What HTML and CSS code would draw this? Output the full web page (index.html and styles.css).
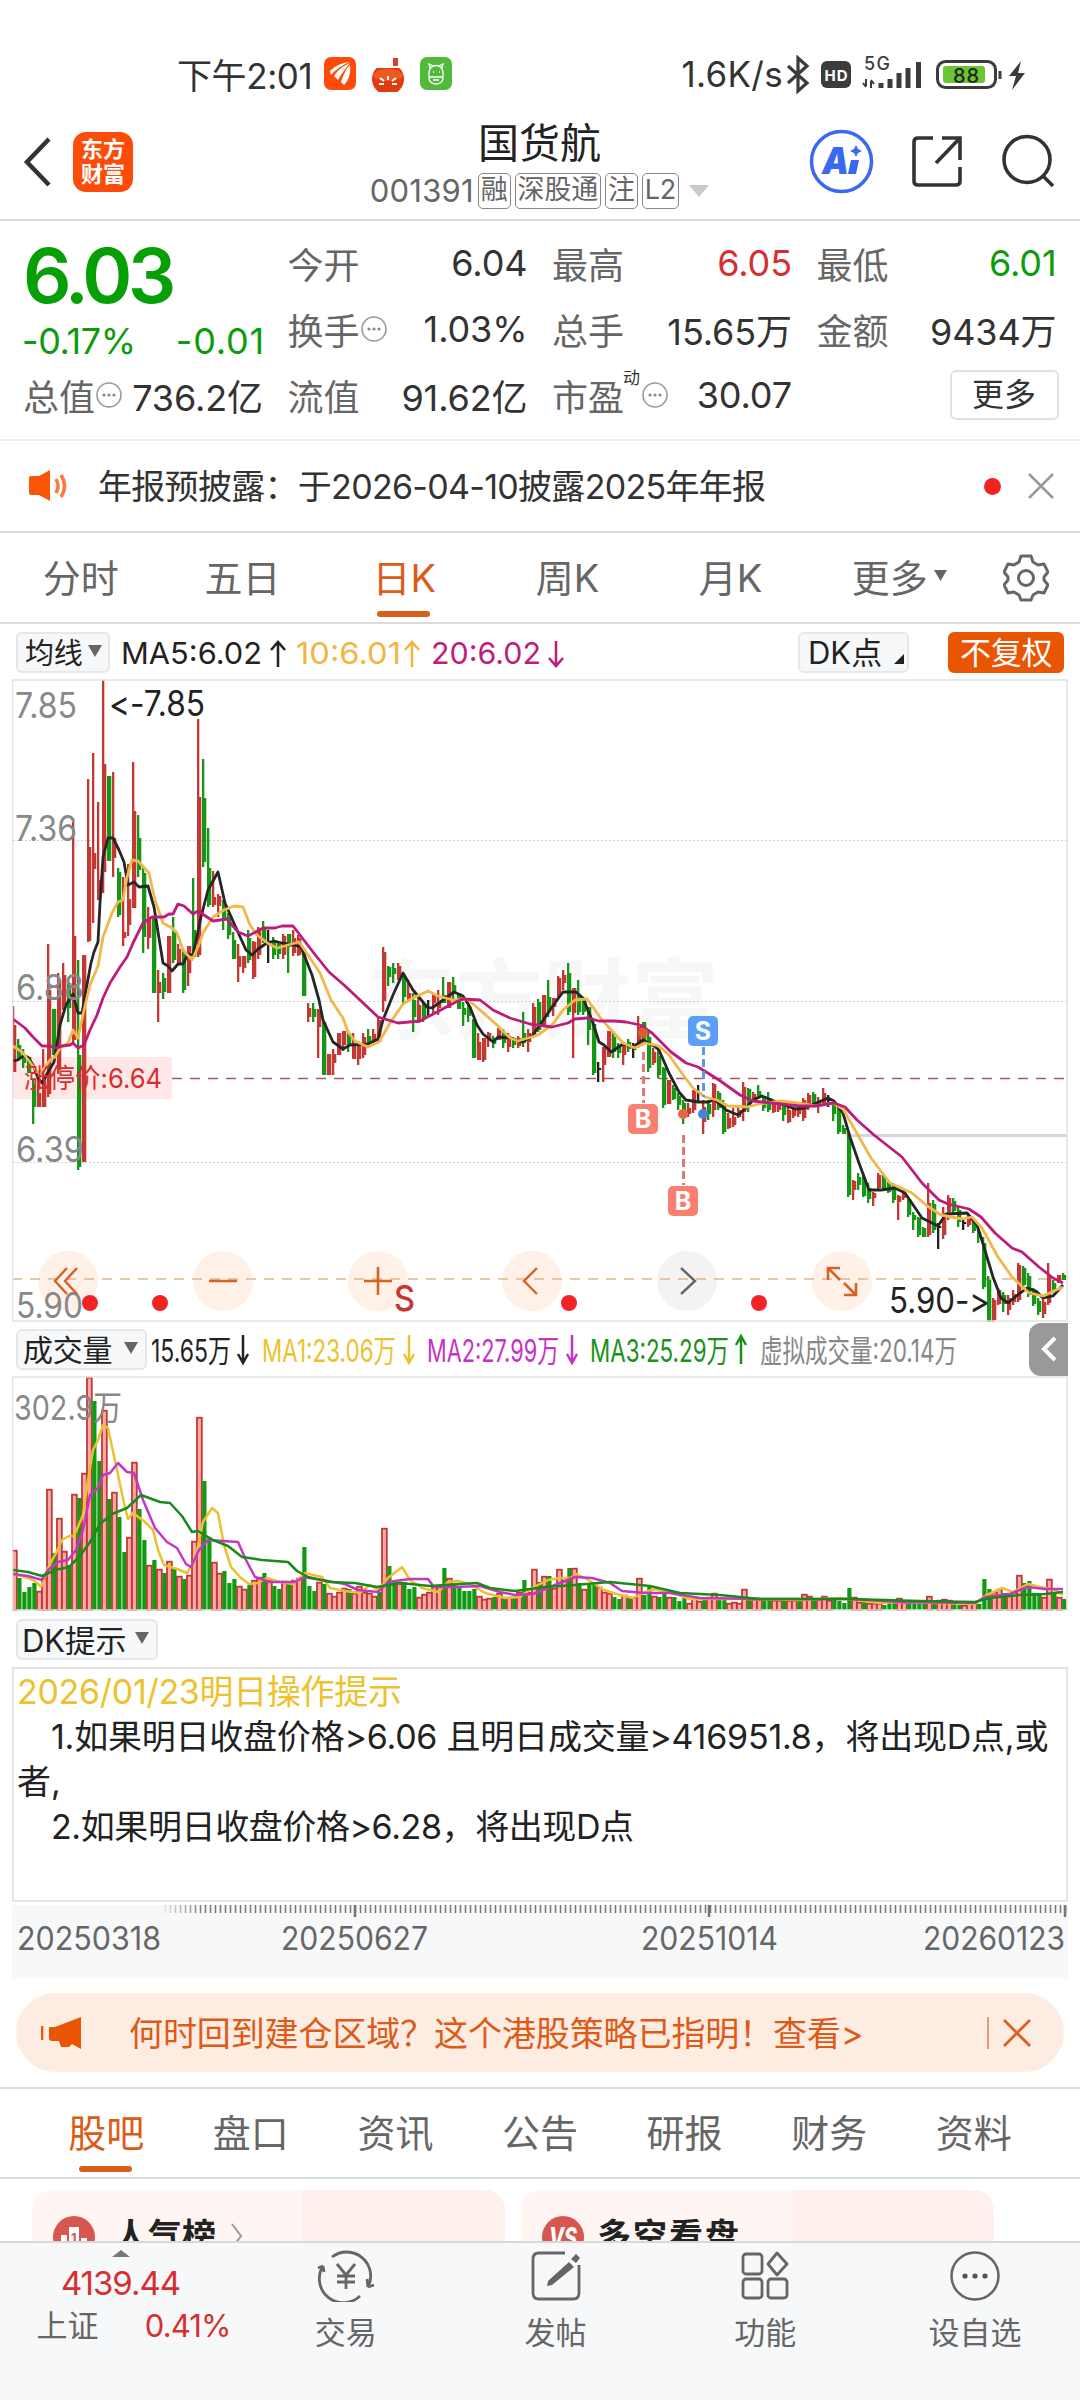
FILE: index.html
```html
<!DOCTYPE html>
<html lang="zh-CN">
<head>
<meta charset="utf-8">
<title>国货航 001391</title>
<link rel="stylesheet" href="styles.css">
</head>
<body>
<div class="screen">
  <div class="status">
    <span class="clock">下午2:01</span>
    <svg class="apps" width="130" height="36" viewBox="0 0 130 36">
      <rect x="1" y="1" width="32" height="33" rx="7" fill="#fd4b0a"/>
      <path d="M7 15C12 10 18 7 26 6C22 8 13 13 8 19ZM11 20C15 14 20 10 27 7C23 12 18 18 15 24ZM18 26C20 19 23 13 27 9C28 16 26 24 21 29Z" fill="#fff"/>
      <circle cx="65" cy="23" r="16" fill="#e23a12"/><rect x="48" y="0" width="34" height="12" fill="#fff"/><ellipse cx="65" cy="19" rx="15" ry="6" fill="#ec5a22"/>
      <path d="M70 2h5v8h-5z" fill="#c8452c"/><path d="M57 22l4 3m-5 3h5m12-6l-4 3m5 3h-5M65 20v4" stroke="#fff" stroke-width="2"/>
      <rect x="97" y="1" width="32" height="33" rx="7" fill="#52b93c"/>
      <g fill="none" stroke="#fff" stroke-width="1.3"><path d="M106 17c0-10 14-10 14 0v5c0 8-14 8-14 0zM107 12l-1-4 4 2m9 2l1-4-4 2M106 21h14"/><path d="M110 16h1m5 0h1M110 24h6"/></g>
    </svg>
    <span class="speed">1.6K/s</span>
    <svg class="sysicons" width="244" height="40" viewBox="784 55 244 40">
      <path d="M788 66l19 17-9 8V58l9 8-19 17" fill="none" stroke="#3c3c3c" stroke-width="3.2"/>
      <rect x="821" y="61" width="30" height="27" rx="6" fill="#3c3c3c"/>
      <text x="824.500" y="81" class="hd" textLength="23">HD</text>
      <text x="864" y="70" class="fiveg" textLength="26">5G</text>
      <path d="M866 79v7m0 1l-3-4m8 5v-7m0-1l3 4" stroke="#3c3c3c" stroke-width="2" fill="none"/>
      <path d="M881 88v-5M890 88v-9M899 88v-15M908 88v-20M918.500 88v-26" stroke="#3c3c3c" stroke-width="5"/>
      <rect x="937.500" y="61.500" width="58" height="26" rx="8" fill="none" stroke="#3c3c3c" stroke-width="3"/>
      <rect x="943" y="66" width="42" height="17" rx="3" fill="#69c530"/>
      <path d="M1000 71v8" stroke="#3c3c3c" stroke-width="3"/>
      <text x="953" y="83" class="batt" textLength="26">88</text>
      <path d="M1021 61l-12 15h7l-4 14 13-17h-7z" fill="#3c3c3c"/>
    </svg>
  </div>

  <header class="header">
    <svg width="32" height="56" viewBox="0 0 32 56"><path d="M27 5L5 28l22 23" fill="none" stroke="#333" stroke-width="4.500"/></svg>
    <div class="logo"><span>东方</span><span>财富</span></div>
    <div class="title">
      <h1>国货航</h1>
      <div class="sub"><span class="code">001391</span><i class="tag">融</i><i class="tag">深股通</i><i class="tag">注</i><i class="tag">L2</i><svg width="20" height="14"><path d="M0 1h20l-10 12z" fill="#c9c9c9"/></svg></div>
    </div>
    <svg class="tools" width="248" height="68" viewBox="808 129 248 68">
      <circle cx="841.500" cy="162.500" r="30" fill="none" stroke="#3a68f0" stroke-width="3.500"/>
      <text x="822" y="175" class="ai" textLength="27" lengthAdjust="spacingAndGlyphs">A</text>
      <path d="M851 161h8l-3 14h-8z" fill="#3a68f0"/><path d="M856 146l2 4 4 2-4 2-2 4-2-4-4-2 4-2z" fill="#3a68f0"/>
      <path d="M933 139h-15q-4 0-4 4v39q0 4 4 4h38q4 0 4-4v-14M942 139h18v22M960 139l-24 25" fill="none" stroke="#333" stroke-width="3.600"/>
      <circle cx="1027" cy="160.500" r="23" fill="none" stroke="#333" stroke-width="3.600"/><path d="M1042 176l11 11" stroke="#333" stroke-width="3.600"/>
    </svg>
  </header>

  <section class="quote">
    <div class="now">
      <b class="price">6.03</b>
      <div class="chg"><span>-0.17%</span><span>-0.01</span></div>
      <div class="kv"><span class="k">总值</span><svg class="info" width="26" height="26"><use href="#more"/></svg><span class="v">736.2亿</span></div>
    </div>
    <div class="col">
      <div class="kv"><span class="k">今开</span><span class="v">6.04</span></div>
      <div class="kv"><span class="k">换手</span><svg class="info" width="26" height="26"><use href="#more"/></svg><span class="v">1.03%</span></div>
      <div class="kv"><span class="k">流值</span><span class="v">91.62亿</span></div>
    </div>
    <div class="col">
      <div class="kv"><span class="k">最高</span><span class="v up">6.05</span></div>
      <div class="kv"><span class="k">总手</span><span class="v">15.65万</span></div>
      <div class="kv"><span class="k">市盈</span><sup>动</sup><svg class="info" width="26" height="26"><use href="#more"/></svg><span class="v">30.07</span></div>
    </div>
    <div class="col">
      <div class="kv"><span class="k">最低</span><span class="v down">6.01</span></div>
      <div class="kv"><span class="k">金额</span><span class="v">9434万</span></div>
      <div class="kv"><button class="morebtn">更多</button></div>
    </div>
  </section>
  <svg width="0" height="0" class="defs"><defs><g id="more"><circle cx="13" cy="13" r="12" fill="none" stroke="#9a9a9a" stroke-width="1.600"/><circle cx="8" cy="13" r="1.600" fill="#888"/><circle cx="13" cy="13" r="1.600" fill="#888"/><circle cx="18" cy="13" r="1.600" fill="#888"/></g></defs></svg>

  <section class="notice">
    <svg width="40" height="34" viewBox="0 0 40 34"><path d="M2 7h8L21 1v31L10 26H2Q0 26 0 24V9Q0 7 2 7z" fill="#fb5607"/><path d="M27 10q4 7 0 14M32 6q7 11 0 22" fill="none" stroke="#fb7a3d" stroke-width="3.500"/></svg>
    <span class="ntext">年报预披露：于2026-04-10披露2025年年报</span>
    <i class="dot"></i>
    <svg width="26" height="26"><path d="M1 1l24 24M25 1L1 25" stroke="#999" stroke-width="2.500"/></svg>
  </section>

  <nav class="periods">
    <span>分时</span><span>五日</span><span class="on">日K</span><span>周K</span><span>月K</span><span>更多<svg width="13" height="11"><path d="M0 0h13l-6.500 11z" fill="#666"/></svg></span>
    <svg class="gear" width="46" height="48" viewBox="0 0 46 48"><path d="M18 2h10l2 6 5 3 6-1 4 8-4 5v3l4 5-4 8-6-1-5 3-2 5H18l-2-5-5-3-6 1-4-8 4-5v-3l-4-5 4-8 6 1 5-3z" fill="none" stroke="#666" stroke-width="3" stroke-linejoin="round"/><circle cx="23" cy="24" r="7.500" fill="none" stroke="#666" stroke-width="3"/></svg>
  </nav>

  <div class="legend">
    <span class="chip ma">均线<svg width="14" height="12"><path d="M0 0h14l-7 12z" fill="#666"/></svg></span>
    <svg class="fill" width="640" height="44" viewBox="118 630 640 44">
      <text x="121" y="664" fill="#222" textLength="141" lengthAdjust="spacingAndGlyphs">MA5:6.02</text>
      <text x="296" y="664" fill="#f2b541" textLength="105" lengthAdjust="spacingAndGlyphs">10:6.01</text>
      <text x="431" y="664" fill="#c01b7e" textLength="110" lengthAdjust="spacingAndGlyphs">20:6.02</text>
      <g fill="none" stroke-width="2.500"><path d="M278 667v-25m-7 8l7-8 7 8" stroke="#222"/><path d="M412 667v-25m-7 8l7-8 7 8" stroke="#f2b541"/><path d="M556 641v25m-7-8l7 8 7-8" stroke="#c01b7e"/></g>
    </svg>
    <span class="chip dk">DK点<svg width="10" height="10"><path d="M10 0v10H0z" fill="#222"/></svg></span>
    <span class="chip solid">不复权</span>
  </div>

  <svg id="kline" class="plot" width="1056" height="643" viewBox="12 679 1056 643"></svg>

  <div class="legend vol">
    <span class="chip">成交量<svg width="14" height="12"><path d="M0 0h14l-7 12z" fill="#666"/></svg></span>
    <svg class="fill" width="820" height="44" viewBox="149 1328 820 44">
      <g>
      <text x="151" y="1363" fill="#222" textLength="80" lengthAdjust="spacingAndGlyphs">15.65万</text>
      <text x="262" y="1363" fill="#edc22f" textLength="134" lengthAdjust="spacingAndGlyphs">MA1:23.06万</text>
      <text x="427" y="1363" fill="#c432c8" textLength="132" lengthAdjust="spacingAndGlyphs">MA2:27.99万</text>
      <text x="590" y="1363" fill="#1a921a" textLength="139" lengthAdjust="spacingAndGlyphs">MA3:25.29万</text>
      <text x="760" y="1363" fill="#888" textLength="197" lengthAdjust="spacingAndGlyphs">虚拟成交量:20.14万</text>
      </g>
      <g fill="none" stroke-width="2.500"><path d="M243 1336v28m-5-9l5 9 5-9" stroke="#222"/><path d="M409 1336v28m-5-9l5 9 5-9" stroke="#edc22f"/><path d="M572 1336v28m-5-9l5 9 5-9" stroke="#c432c8"/><path d="M741 1365v-28m-5 9l5-9 5 9" stroke="#1a921a"/></g>
    </svg>
    <span class="fold"><svg width="16" height="26"><path d="M14 2L3 13l11 11" fill="none" stroke="#fff" stroke-width="4"/></svg></span>
  </div>

  <svg id="volume" class="plot" width="1056" height="235" viewBox="12 1376 1056 235"></svg>

  <div class="legend hint"><span class="chip">DK提示<svg width="14" height="12"><path d="M0 0h14l-7 12z" fill="#666"/></svg></span></div>

  <div class="dkbox">
    <p class="gold">2026/01/23明日操作提示</p>
    <p class="ind tight">1.如果明日收盘价格&gt;6.06 且明日成交量&gt;416951.8，将出现D点,或</p>
    <p>者,</p>
    <p class="ind">2.如果明日收盘价格&gt;6.28，将出现D点</p>
  </div>

  <svg id="axis" class="axis" width="1056" height="73" viewBox="12 1905 1056 73"></svg>

  <div class="banner">
    <svg width="42" height="34" viewBox="0 0 42 34"><path d="M1 10v14" stroke="#ea5504" stroke-width="2.500"/><path d="M8 11h6L40 1v32l-9-5-3 3h-8l-2-6h-7q-3 0-3-3z" fill="#ea5504"/></svg>
    <span class="btext">何时回到建仓区域？这个港股策略已指明！查看&gt;</span>
    <i class="bar"></i>
    <svg width="30" height="28"><path d="M2 1l26 26M28 1L2 27" stroke="#dd5f20" stroke-width="2.800"/></svg>
  </div>

  <nav class="sections"><span class="on">股吧</span><span>盘口</span><span>资讯</span><span>公告</span><span>研报</span><span>财务</span><span>资料</span></nav>

  <div class="cards">
    <div class="card">
      <svg width="42" height="42" viewBox="0 0 42 42"><circle cx="21" cy="21" r="21" fill="#d85650"/><path d="M8 19h6v18H8zM16 11h10v26H16zM28 22h6v15h-6z" fill="#fff"/><text x="18" y="27" class="one">1</text></svg>
      <b>人气榜</b><svg width="14" height="28"><path d="M2 2l9 12-9 12" fill="none" stroke="#999" stroke-width="2"/></svg>
    </div>
    <div class="card">
      <svg width="42" height="42" viewBox="0 0 42 42"><circle cx="21" cy="21" r="21" fill="#d85650"/><text x="7" y="32" class="vs" textLength="28" lengthAdjust="spacingAndGlyphs">VS</text></svg>
      <b>多空看盘</b>
    </div>
  </div>

  <footer class="bottom">
    <div class="index">
      <svg width="18" height="7"><path d="M0 7L9 0l9 7z" fill="#777"/></svg>
      <span class="idx">4139.44</span>
      <div><span>上证</span><span class="up2">0.41%</span></div>
    </div>
    <div class="item"><svg width="60" height="52" viewBox="-30 -26 60 52"><g fill="none" stroke="#666" stroke-width="2.800"><path d="M-14-19A24 24 0 0 1 22 11M14 20A24 24 0 0 1-23-10M22 11l6-2m-6 2l-1-8M-23-10l-5 2m5-2l1 6"/><path d="M-9-12l9 11 9-11M0-1v14M-9 0H9M-9 6H9"/></g></svg><span>交易</span></div>
    <div class="item"><svg width="60" height="52" viewBox="-30 -26 60 52"><g fill="none" stroke="#666" stroke-width="2.800"><path d="M9-23h-26q-6 0-6 6v34q0 6 6 6h34q6 0 6-6V-11"/></g><path d="M13-14l5 5L-4 9l-5 1 1-5zM15-17l5-5 4 4-4 5z" fill="#666"/></svg><span>发帖</span></div>
    <div class="item"><svg width="60" height="52" viewBox="-30 -26 60 52"><g fill="none" stroke="#666" stroke-width="2.800"><rect x="-22" y="-22" width="19" height="20" rx="3"/><rect x="-22" y="3" width="19" height="19" rx="3"/><rect x="3" y="3" width="19" height="19" rx="3"/><path d="M12-23l10 11-10 11-9-11z" stroke-linejoin="round"/></g></svg><span>功能</span></div>
    <div class="item"><svg width="60" height="52" viewBox="-30 -26 60 52"><circle r="23.500" fill="none" stroke="#666" stroke-width="2.600"/><circle cx="-10" r="2.600" fill="#555"/><circle r="2.600" fill="#555"/><circle cx="10" r="2.600" fill="#555"/></svg><span>设自选</span></div>
  </footer>
</div>
<script src="chart.js"></script>
</body>
</html>
```
FILE: styles.css
```css
* { box-sizing: border-box; }
body { margin: 0; background: #fff; font-family: Inter, "Noto Sans CJK SC", sans-serif; color: #333; font-feature-settings: "calt" 0; }
.screen { width: 1080px; height: 2400px; overflow: hidden; display: flex; flex-direction: column; position: relative; }
svg { display: block; flex: none; }
svg text { font-feature-settings: "calt" 0; }
i { font-style: normal; }
.defs { position: absolute; }
.status { height: 124px; padding: 26px 52px 0 177px; display: flex; align-items: center; font-size: 35px; flex: none; }
.clock { width: 146px; letter-spacing: -.4px; white-space: nowrap; margin-top: -4px; }
.apps { margin-right: auto; margin-bottom: 2px; }
.speed { letter-spacing: .3px; margin: -3px 1px 0 0; }
.hd { font: 700 15px Inter, sans-serif; fill: #fff; }
.fiveg { font: 500 18px Inter, sans-serif; fill: #3c3c3c; }
.batt { font: 500 20px Inter, sans-serif; fill: #222; }
.header { height: 97px; border-bottom: 2px solid #ddd; display: flex; align-items: center; padding: 0 24px 20px 22px; position: relative; flex: none; }
.logo { margin-left: 19px; width: 60px; height: 60px; border-radius: 13px; background: #fd4b0a; color: #fff; font-weight: 700; font-size: 22px; line-height: 25px; display: flex; flex-direction: column; align-items: center; justify-content: center; }
.title { flex: 1; display: flex; flex-direction: column; align-items: center; padding-left: 138px; margin-top: 10px; }
h1 { margin: 0; font-weight: 400; font-size: 41px; line-height: 48px; color: #222; }
.sub { display: flex; align-items: center; gap: 4px; height: 48px; font-size: 29px; color: #666; }
.code { letter-spacing: .2px; margin-right: 0; font-size: 31px; }
.tag { border: 1.5px solid #888; border-radius: 5px; height: 36px; line-height: 32px; padding: 0 2px; font-size: 27px; letter-spacing: -.2px; }
.sub svg { margin-left: 6px; }
.ai { font: italic 900 37px Inter, sans-serif; fill: #3a68f0; }
.quote { height: 220px; border-bottom: 2px solid #eee; display: grid; grid-template-columns: repeat(4, 240px); column-gap: 24.500px; padding: 9px 0 0 23px; flex: none; font-size: 36px; }
.kv { height: 66px; display: flex; align-items: center; white-space: nowrap; }
.k { color: #666; }
.v { margin-left: auto; letter-spacing: -.1px; }
.up { color: #d62f2f; }
.down { color: #0d9b0d; }
.info { margin: 0 0 0 1px; }
sup { font-size: 17px; align-self: flex-start; line-height: 20px; margin: 6px 0 0 -1px; }
sup + .info { margin-left: 2px; }
.price { display: block; height: 90px; line-height: 90px; font-size: 76px; font-weight: 600; letter-spacing: -4.500px; color: #06a006; }
.chg { height: 42px; display: flex; justify-content: space-between; align-items: center; color: #0d9b0d; letter-spacing: 0; font-size: 36px; margin: 0 -2px 0 -1px; }
.chg span:first-child { letter-spacing: -.4px; }
.chg span + span { letter-spacing: .8px; }
.morebtn { margin: 0 -2px 0 auto; width: 109px; height: 50px; border: 2px solid #e2e2e2; border-radius: 6px; background: #fff; font: inherit; font-size: 32px; line-height: 40px; color: #333; padding: 0; }
.notice { height: 92px; border-bottom: 2px solid #ddd; display: flex; align-items: center; padding: 0 26px 0 29px; flex: none; font-size: 34px; }
.ntext { margin: -3px 0 0 29px; letter-spacing: -.7px; }
.dot { width: 17px; height: 17px; border-radius: 50%; background: #f02222; margin-left: auto; margin-right: 27px; }
.periods { height: 91px; border-bottom: 2px solid #ddd; display: flex; align-items: stretch; flex: none; font-size: 38px; color: #666; }
.periods > span { width: 161.7px; display: flex; align-items: center; justify-content: center; position: relative; padding-bottom: 4px; }
.periods span svg { margin-left: 6px; }
.periods span:nth-child(4) { padding-left: 3px; }
.periods span:nth-child(5) { padding-left: 6px; }
.periods span:nth-child(6) { padding-left: 20px; }
.on { color: #db5c17; }
.on::after { content: ""; position: absolute; left: 50%; margin-left: -27px; bottom: 5px; width: 53px; height: 6px; border-radius: 3px; background: #d95e17; }
.gear { margin: 21px 0 0 33px; }
.legend { height: 55px; padding: 1px 12px 0 16px; display: flex; align-items: center; flex: none; }
.chip { display: flex; align-items: center; justify-content: space-between; height: 41px; padding: 0 7px 3px 5px; border: 2px solid #e6e7ea; border-radius: 6px; background: #f7f8fa; color: #222; font-size: 30px; letter-spacing: -.2px; width: 131px; white-space: nowrap; }
.legend text { font: 30px Inter, "Noto Sans CJK SC", sans-serif; }
.chip.ma { width: 94px; padding: 0 6px 3px 7px; font-size: 29px; }
.fill { margin-left: 8px; }
.chip.dk { margin-left: 40px; width: 111px; padding-left: 8px; padding-right: 3px; font-size: 31px; letter-spacing: 0; }
.chip.dk svg { margin-top: 16px; }
.chip.solid { margin-left: auto; margin-right: 4px; background: #ea5504; border-color: #ea5504; color: #fff; width: 116px; padding: 0 10px 3px; font-size: 31px; }
.plot { margin-left: 12px; }
.vol { height: 54px; padding-top: 0; }
.vol .fill { margin-left: 2px; }
.vol .fill text { font-size: 31px; }
.fold { margin-left: auto; width: 39px; height: 53px; border-radius: 12px 0 0 12px; background: #999; display: flex; align-items: center; justify-content: center; }
.hint { height: 56px; }
.hint .chip { width: 142px; font-size: 31px; padding-left: 4px; }
.dkbox { margin: 0 12px; height: 235px; border: 2px solid #e4e4e4; flex: none; padding: 0 3px; font-size: 34px; line-height: 45px; color: #222; }
.dkbox p { margin: 0; white-space: pre; letter-spacing: 0; }
.dkbox .ind { padding-left: 34px; letter-spacing: -.4px; }
.dkbox .tight { letter-spacing: -.22px; }
.dkbox .gold { color: #edc22f; letter-spacing: -.3px; }
.axis { margin: 3px 0 0 12px; background: #f7f8fa; }
.axis text { font-family: Inter, sans-serif; }
.banner { margin: 15px 16px 0; height: 79px; border-radius: 40px; background: #fdece2; display: flex; align-items: center; padding: 0 32px 0 25px; flex: none; color: #dd5a17; font-size: 34px; }
.btext { margin: -2px 0 0 46px; letter-spacing: -.1px; }
.bar { margin-left: auto; margin-right: 13px; width: 2px; height: 32px; background: #e39a6f; }
.sections { margin-top: 15px; height: 92px; border-top: 2px solid #ddd; border-bottom: 2px solid #ddd; display: flex; padding: 0 34px; flex: none; font-size: 38px; color: #666; }
.sections span { flex: 1; display: flex; align-items: center; justify-content: center; position: relative; padding-bottom: 5px; }
.cards { height: 62px; padding: 11px 32px 0; display: flex; gap: 16px; flex: none; overflow: hidden; }
.card { width: 473px; height: 120px; border-radius: 20px; background: linear-gradient(90deg, #fff6f4 0 57%, #fff0ee 57%); display: flex; align-items: flex-start; padding: 26px 0 0 21px; }
.card b { font-size: 34px; line-height: 40px; margin: 0 14px 0 19px; color: #222; letter-spacing: 0; }
.card:nth-child(2) b { margin-left: 13px; letter-spacing: 2px; }
.card svg + b + svg { margin-top: 6px; }
.one { font: 700 13px Inter, sans-serif; fill: #d85650; }
.vs { font: italic 800 28px Inter, sans-serif; fill: #fff; }
.bottom { height: 159px; background: #f7f8fa; border-top: 2px solid #d8d8d8; display: flex; flex: none; color: #666; font-size: 30px; }
.index { width: 241px; padding-top: 7px; display: flex; flex-direction: column; align-items: center; }
.index .idx { color: #d62f2f; font-size: 33px; line-height: 44px; margin-top: 4px; letter-spacing: -1px; }
.index div { display: flex; justify-content: space-between; line-height: 42px; width: 194px; white-space: nowrap; margin-left: 26px; align-self: center; }
.index div span:first-child { font-size: 31px; }
.up2 { color: #d62f2f; letter-spacing: -.9px; font-size: 31px; }
.item { width: 209.7px; padding-top: 7px; display: flex; flex-direction: column; align-items: center; }
.item span { line-height: 44px; margin-top: 9px; font-size: 31px; }
```
FILE: chart.js
```js
// Daily bars: colour (r/g/k), high, low, body top, body bottom in plot coordinates
const bars = `r1006 1072 1025 1072,g1039 1059 1045 1059,g1049 1068 1055 1063,g1057 1073,g1080 1124 1085 1107,r1078 1107 1093 1107,r1049 1107 1075 1107,r944 1097 990 1094,g1009 1055,r973 1074 980 1070,r963 1010 975 1005,g982 1022 983 1008,r822 1045 936 1040,g960 1170 1055 1167,r955 1162,r779 942 847 941,r753 923 853 869,r802 900 880 893,r680 893 764 872,g776 861,r772 877 838 858,g868 917 872 915,r877 946 932 938,r864 936 899 925,r762 908 811 908,g815 877 838 870,g867 953 873 937,r907 949 917 938,g917 993,r970 1022 982 993,g973 999 978 992,r936 993,g917 963 930 960,r944 963 949 963,g949 993 952 990,r946 986 946 973,g878 957 930 957,r719 957 797 955,g759 867 798 862,g828 907 868 905,r871 907 897 905,r894 917 896 906,g900 930 905 920,g913 939 917 935,g932 959 940 959,r944 982 956 967,r956 973 956 968,g930 963 938 960,r941 979 942 977,r927 959 930 955,g921 943 927 941,k930 963 943 945,g937 959 940 955,g942 959 944 954,r934 959 936 955,g934 973 934 947,r930 956 938 953,r935 956 938 955,g952 996,r1003 1022 1008 1017,g1003 1022 1009 1017,r1009 1058 1010 1027,g1022 1075,r1054 1075,r1049 1075 1054 1063,r1033 1055,r1031 1051 1031 1045,g1031 1052 1033 1045,r1033 1059 1045 1059,r1045 1065 1045 1059,r1033 1058 1037 1055,g1029 1045 1036 1044,r1029 1043 1034 1042,r1017 1043 1020 1042,r947 1012 952 1001,g966 986 967 977,g963 983 968 974,r963 980 966 979,g976 1003 977 997,r980 1000 993 999,g993 1032 1000 1017,r997 1023 1005 1021,g1003 1022 1006 1017,k1000 1017 1007 1009,r993 1013 995 1003,r990 1015 1002 1008,g977 1003 995 1003,r982 1008,g977 1000 985 993,g993 1009,g1002 1026 1008 1015,g1002 1022 1008 1016,g1019 1058,r1033 1060 1042 1060,r1038 1062 1038 1060,r1032 1047 1033 1040,g1036 1048 1038 1044,r1028 1040 1030 1040,g1029 1048 1033 1043,r1033 1052 1036 1047,g1037 1048 1038 1045,r1036 1048 1038 1046,g1012 1047 1033 1043,r1029 1052 1033 1042,r1003 1038 1007 1037,g999 1032 1002 1030,r995 1026,g980 1017 997 1012,r998 1016 998 1007,r976 998 978 996,r970 990 975 983,g963 1015 973 1012,r988 1058 988 1013,g980 1015 995 1012,g997 1015 1000 1012,g1007 1045 1007 1030,g1018 1075 1024 1073,k1062 1082 1068 1070,r1047 1082 1047 1065,r1031 1057,g1033 1058 1037 1052,g1043 1058 1045 1053,r1043 1065 1045 1055,g1039 1052 1042 1049,k1043 1058 1048 1050,r1016 1048 1027 1045,g1022 1043,g1032 1072 1037 1068,r1048 1065 1052 1063,g1050 1078 1056 1075,g1067 1108 1068 1105,r1080 1104,g1085 1100 1088 1099,g1093 1110 1096 1105,g1100 1124 1103 1113,r1103 1117 1108 1114,r1090 1113 1090 1110,k1085 1103 1092 1094,r1100 1134 1107 1122,g1100 1120 1104 1114,r1083 1117 1084 1110,g1091 1110 1093 1108,g1100 1134 1103 1132,r1113 1129 1118 1128,r1108 1127 1117 1125,r1105 1118 1110 1117,r1082 1121 1087 1112,g1088 1112 1089 1106,r1092 1100 1094 1098,g1085 1098 1091 1098,g1097 1111 1099 1108,g1092 1112 1098 1110,r1100 1113 1103 1112,r1102 1112 1105 1110,g1103 1121 1105 1115,r1107 1123 1110 1122,r1107 1118 1109 1116,r1105 1117 1108 1114,r1098 1121 1100 1118,r1093 1110 1095 1107,g1092 1107 1094 1105,r1097 1113 1100 1107,r1088 1104 1093 1103,k1095 1107 1099 1101,g1100 1121 1102 1114,g1107 1134 1110 1132,g1125 1134 1128 1134,g1133 1197 1138 1195,r1180 1200 1181 1190,g1173 1190 1177 1185,g1173 1197 1179 1196,g1183 1203 1188 1199,r1192 1206 1193 1198,r1173 1190 1175 1188,g1174 1190 1177 1188,g1182 1193 1184 1192,g1183 1203 1186 1200,r1195 1220 1196 1202,r1190 1200 1193 1198,g1197 1217 1199 1215,g1212 1230 1215 1220,g1217 1237 1218 1235,g1227 1237 1228 1237,r1183 1237 1203 1235,g1200 1233 1204 1230,k1223 1249 1226 1228,r1207 1239 1213 1235,r1195 1220 1198 1212,g1198 1215 1201 1211,g1207 1227 1210 1222,k1220 1230 1222 1224,r1213 1227 1216 1225,g1220 1233 1223 1231,g1230 1243 1232 1238,g1237 1289 1243 1287,g1276 1322 1280 1322,r1298 1322 1300 1320,r1288 1305 1290 1304,g1292 1312 1295 1304,r1295 1315 1298 1310,r1290 1305 1294 1302,r1263 1302 1265 1300,g1266 1288 1268 1285,g1273 1297 1276 1295,g1288 1306 1290 1304,g1298 1315 1301 1312,r1298 1318 1302 1314,r1263 1305 1277 1303,g1280 1290 1283 1289,r1275 1283,g1273 1280 1275 1280`.split(',').map(s => [s[0], ...s.slice(1).split(' ').map(Number)]);

// Volume bar tops
const vols = `r1550 g1578 g1592 g1587 g1583 r1591 r1578 r1489 g1553 r1518 r1551 g1565 r1494 g1498 r1473 r1377 g1401 g1461 r1410 g1499 r1492 g1517 g1552 r1537 r1462 g1509 g1540 r1565 g1560 r1569 g1573 r1561 g1568 r1576 g1579 r1575 r1541 r1417 g1481 g1537 r1562 r1573 g1571 g1583 g1579 r1586 r1589 g1585 r1580 r1577 g1573 r1580 g1586 g1589 r1581 g1583 r1580 r1578 g1547 g1586 g1591 r1582 g1584 r1593 r1596 r1592 r1588 g1589 r1593 r1586 r1592 r1593 r1596 g1592 r1528 g1566 g1580 r1583 g1582 g1589 g1587 r1597 r1594 r1592 r1586 r1586 g1568 r1578 g1585 g1587 g1591 g1591 g1589 r1596 r1599 r1598 g1597 r1593 g1598 r1597 g1597 r1592 g1580 r1592 r1569 g1582 r1576 g1576 r1588 r1569 r1580 g1568 r1568 g1583 r1589 g1585 g1583 r1587 r1592 r1593 g1597 g1599 r1595 g1598 r1597 r1578 g1595 g1585 r1596 g1597 g1592 r1597 g1597 g1601 g1598 r1603 r1598 r1601 g1600 r1597 r1593 g1598 g1598 r1603 r1602 r1603 r1589 g1597 r1599 r1599 g1599 g1600 r1600 r1600 g1599 r1600 r1600 g1600 r1594 r1596 g1598 r1599 r1596 r1600 g1599 g1601 g1603 g1588 r1597 r1602 g1601 r1603 r1603 r1603 g1605 g1603 g1603 r1598 r1602 g1603 g1603 g1603 g1602 r1596 g1602 r1600 r1599 r1600 g1604 g1605 r1605 r1603 r1603 g1604 g1579 g1589 r1592 r1589 g1593 r1593 r1592 r1575 g1583 g1581 g1593 g1594 r1597 r1579 g1592 r1597 g1599`.split(' ');

const ma = {
  black: '13,1061 18,1060 23,1056 28,1057 33,1065 38,1078 42,1083 48,1072 54,1062 60,1025 66,1005 73,994 78,1013 82,1013 86,990 91,963 94,952 98,942 100,903 103,857 108,838 113,838 119,850 124,862 128,885 134,882 139,887 148,886 154,907 163,963 168,966 172,971 178,964 183,964 188,954 193,955 201,917 208,890 218,872 225,903 237,930 246,950 252,955 258,949 267,943 274,941 282,943 294,945 301,947 312,975 319,1000 323,1020 333,1042 343,1049 350,1045 368,1044 378,1039 383,1020 393,995 403,973 413,990 427,1007 432,1008 443,1000 454,992 463,996 470,1007 477,1025 483,1034 493,1042 498,1037 510,1038 522,1042 532,1036 542,1022 552,1007 563,992 576,992 583,998 592,1020 599,1042 604,1045 611,1052 623,1044 633,1047 643,1040 654,1046 659,1050 669,1073 679,1092 686,1100 698,1102 709,1102 714,1099 726,1110 738,1115 747,1107 753,1100 762,1096 774,1101 795,1109 805,1108 828,1098 834,1101 843,1113 850,1137 859,1163 869,1190 881,1190 895,1188 905,1193 922,1218 938,1226 946,1214 967,1213 977,1225 984,1247 993,1277 1001,1298 1008,1303 1015,1297 1027,1288 1036,1291 1043,1298 1053,1296 1063,1285',
  gold: '13,1046 22,1052 30,1062 37,1072 43,1070 50,1060 55,1057 60,1048 68,1043 73,1030 78,1038 84,1010 90,985 98,966 103,937 112,913 118,902 123,900 127,877 132,860 138,861 149,873 155,900 163,923 172,928 177,933 183,950 192,960 198,947 203,933 213,917 224,910 234,906 243,907 250,925 257,935 269,944 277,948 288,945 299,942 306,952 320,973 331,1000 343,1018 348,1032 355,1041 368,1047 379,1042 390,1023 403,1004 413,998 428,991 438,996 453,1000 467,999 480,1010 497,1025 510,1038 518,1041 538,1035 552,1025 563,1010 575,1000 587,999 595,1010 602,1020 614,1033 623,1043 635,1048 645,1043 659,1046 669,1055 681,1072 693,1088 705,1097 717,1100 728,1106 747,1107 759,1104 781,1101 798,1103 815,1106 833,1103 843,1109 855,1130 871,1158 890,1183 912,1193 926,1205 941,1215 962,1219 972,1217 982,1228 998,1257 1012,1277 1029,1293 1043,1296 1063,1287',
  rose: '13,1019 25,1028 33,1037 42,1046 50,1046 57,1048 62,1046 70,1045 73,1043 78,1048 84,1045 90,1030 97,1015 103,998 110,983 120,967 127,957 133,943 143,923 152,917 164,917 169,914 173,914 178,904 184,906 193,914 198,911 213,921 227,919 238,932 248,936 263,928 275,928 282,926 293,926 300,935 313,952 329,972 344,985 360,1000 378,1017 398,1023 420,1021 437,1012 450,1005 462,999 480,1000 493,1010 510,1018 530,1024 552,1027 568,1023 575,1019 587,1018 599,1021 614,1021 626,1022 640,1025 652,1033 671,1052 686,1063 698,1067 719,1080 740,1095 753,1101 771,1103 800,1106 815,1106 834,1103 845,1107 857,1120 874,1135 902,1157 922,1183 939,1200 948,1204 969,1209 981,1217 995,1233 1012,1248 1022,1252 1039,1267 1053,1278 1063,1283'
};
const vma = {
  gold: '13,1574 25,1577 33,1580 37,1583 41,1587 48,1568 56,1553 62,1540 69,1536 74,1536 83,1515 88,1480 93,1450 98,1440 103,1425 108,1428 117,1470 124,1503 128,1519 133,1513 145,1522 153,1530 158,1550 164,1565 177,1569 187,1573 195,1560 203,1522 212,1508 218,1513 224,1545 231,1567 241,1578 249,1584 258,1583 267,1578 280,1582 293,1584 305,1573 322,1577 330,1588 345,1591 360,1593 370,1585 378,1590 388,1578 402,1567 410,1580 422,1588 438,1592 448,1582 458,1581 470,1584 485,1593 505,1598 520,1597 532,1588 548,1580 560,1578 570,1578 577,1574 590,1581 604,1590 620,1595 633,1598 645,1592 655,1589 675,1594 690,1599 720,1599 745,1599 800,1600 840,1598 880,1603 900,1602 975,1604 985,1596 1002,1588 1013,1592 1028,1584 1040,1587 1055,1590 1063,1595',
  rose: '13,1574 28,1576 42,1580 48,1570 58,1562 68,1560 76,1550 83,1530 90,1495 98,1488 103,1475 110,1473 118,1463 127,1472 134,1473 143,1500 155,1528 167,1542 177,1548 186,1564 191,1567 199,1550 208,1540 238,1542 246,1560 255,1577 270,1582 295,1582 304,1577 345,1584 358,1590 378,1592 388,1582 410,1579 428,1579 434,1587 455,1587 480,1586 500,1592 515,1595 533,1594 550,1587 575,1577 592,1578 610,1583 622,1591 645,1593 670,1593 700,1598 760,1599 850,1599 900,1602 975,1603 985,1597 1010,1594 1027,1587 1045,1589 1063,1589',
  green: '13,1570 28,1572 42,1576 55,1570 69,1567 80,1556 90,1542 100,1524 112,1514 127,1508 141,1495 160,1502 170,1503 182,1516 192,1532 198,1531 213,1540 228,1546 242,1557 262,1560 288,1562 297,1571 308,1577 330,1582 355,1583 377,1587 400,1583 430,1586 460,1584 477,1583 490,1588 515,1591 545,1587 575,1585 610,1582 650,1586 680,1593 720,1595 760,1599 850,1599 920,1601 975,1602 990,1598 1020,1595 1045,1594 1063,1592'
};

const colour = { r: '#c53733', g: '#169616', k: '#222' };
const line = (pts, c, w = 2.8) => `<polyline points="${pts}" fill="none" stroke="${c}" stroke-width="${w}" stroke-linejoin="round"/>`;
const label = (s, x, y, w, c, size = 35, weight = 400) => `<text x="${x}" y="${y}" textLength="${w}" lengthAdjust="spacingAndGlyphs" fill="${c}" font-size="${size}" font-weight="${weight}">${s}</text>`;
const stroke = (d, c, w, extra = '') => `<path d="${d}" fill="none" stroke="${c}" stroke-width="${w}" ${extra}/>`;

let k = '';
k += `<text x="367" y="1032" textLength="352" font-size="88" font-weight="700" fill="#f7f7f7">东方财富</text>`;
for (const y of [840.5, 1001.5, 1162.5]) k += stroke(`M13 ${y}H1067`, '#d2d2d2', 1, 'stroke-dasharray="2 2"');
k += `<rect x="12" y="1057" width="160" height="42" rx="3" fill="#ffe7e7"/>`;
k += stroke('M172 1078.5H1067', '#b85454', 1.4, 'stroke-dasharray="10 8"');
k += stroke('M846 1135.5H1067', '#d2d7dc', 3);
for (const [x, c] of [[68, '#fff0e8'], [223, '#fff0e8'], [378, '#fff0e8'], [532, '#fff0e8'], [687, '#f3f3f3'], [842, '#fff0e8']]) k += `<circle cx="${x}" cy="1281" r="30" fill="${c}"/>`;
k += stroke('M12 1279H1067', '#dfb78e', 1.5, 'stroke-dasharray="10 8"');
bars.forEach(([c, h, l, t, b], i) => {
  const x = 12 + i * 5;
  if (t === undefined) { t = h; b = l; }
  k += `<rect x="${x}" y="${h}" width="2.300" height="${l - h}" fill="${colour[c]}"/><rect x="${x}" y="${t}" width="4.300" height="${b - t}" fill="${colour[c]}"/>`;
});
k += line(ma.black, '#262626') + line(ma.gold, '#f0b84a') + line(ma.rose, '#bd1c7b');
k += stroke('M643.500 1052V1103', '#e07a70', 3, 'stroke-dasharray="8 4"') + stroke('M683.500 1135V1185', '#e07a70', 3, 'stroke-dasharray="8 4"') + stroke('M703.500 1047V1097', '#5f9be0', 3, 'stroke-dasharray="8 4"');
k += '<circle cx="643" cy="1033" r="5" fill="#e05a35"/><circle cx="683" cy="1114" r="5" fill="#ea6444"/><circle cx="703" cy="1114" r="5" fill="#4b7fe0"/>';
for (const [s, x, y, c] of [['B', 628, 1104, '#f97f70'], ['B', 668, 1186, '#f97f70'], ['S', 688, 1016, '#5c9ff8']])
  k += `<rect x="${x}" y="${y}" width="30" height="30" rx="5" fill="${c}"/><text x="${x + 15}" y="${y + 24}" text-anchor="middle" font-size="25" font-weight="700" fill="#fff">${s}</text>`;
k += label('7.85', 15, 718, 62, '#888') + label('7.36', 15, 841, 62, '#888') + label('6.88', 16, 1000, 68, '#888') + label('6.39', 16, 1162, 68, '#888') + label('5.90', 16, 1318, 67, '#888');
k += label('&lt;-7.85', 109, 716, 96, '#222') + label('5.90-&gt;', 889, 1313, 101, '#222');
k += label('涨停价:6.64', 24, 1088, 138, '#d62f2f', 27);
k += stroke('M67 1268L55 1281l12 13M77 1268l-12 13 12 13', '#d8621f', 2.4) + stroke('M209 1281h28M364 1281h28M378 1267v28', '#d8621f', 2.6) + stroke('M537 1268l-13 13 13 13', '#d8621f', 2.4) + stroke('M681 1268l14 13-14 13', '#666', 2.4);
k += stroke('M840 1268h-12v12M828 1268l12 12M844 1295h12v-12M856 1295l-12-12', '#d8621f', 2.6);
for (const x of [90, 160, 569, 759]) k += `<circle cx="${x}" cy="1303" r="8" fill="#f02424"/>`;
k += label('S', 394, 1311, 21, '#c53733', 35, 500);
k += '<rect x="12.500" y="680" width="1054.500" height="641" fill="none" stroke="#e2e2e2" stroke-width="1.500"/>';
document.getElementById('kline').innerHTML = k;

let v = '';
vols.forEach((s, i) => {
  const x = 12 + i * 5, y = +s.slice(1);
  v += s[0] === 'g' ? `<rect x="${x + .3}" y="${y}" width="4.200" height="${1610 - y}" fill="#109a10"/>`
    : `<rect x="${x}" y="${y + .7}" width="4.800" height="${1609.3 - y}" fill="#ffa9a6" stroke="#bd3b37" stroke-width="1.800"/>`;
});
v += line(vma.gold, '#edc02f', 2.5) + line(vma.rose, '#c437c4', 2.5) + line(vma.green, '#1a8a1a', 2.5);
v += label('302.9万', 14, 1420, 108, '#888', 34);
v += '<rect x="12.500" y="1377" width="1054.500" height="233" fill="none" stroke="#e2e2e2" stroke-width="1.500"/>';
document.getElementById('volume').innerHTML = v;

let a = '';
for (let x = 165; x < 1066; x += 5) a += `<path d="M${x + .5} 1905v8" stroke="#777" stroke-width="1.500" opacity="${Math.min(1, (x - 155) / 50)}"/>`;
for (const x of [355, 709, 1065]) a += `<path d="M${x} 1905v12" stroke="#777" stroke-width="2.500"/>`;
a += label('20250318', 17, 1950, 144, '#666', 32) + label('20250627', 281, 1950, 147, '#666', 32) + label('20251014', 641, 1950, 137, '#666', 32) + label('20260123', 923, 1950, 142, '#666', 32);
document.getElementById('axis').innerHTML = a;
```
